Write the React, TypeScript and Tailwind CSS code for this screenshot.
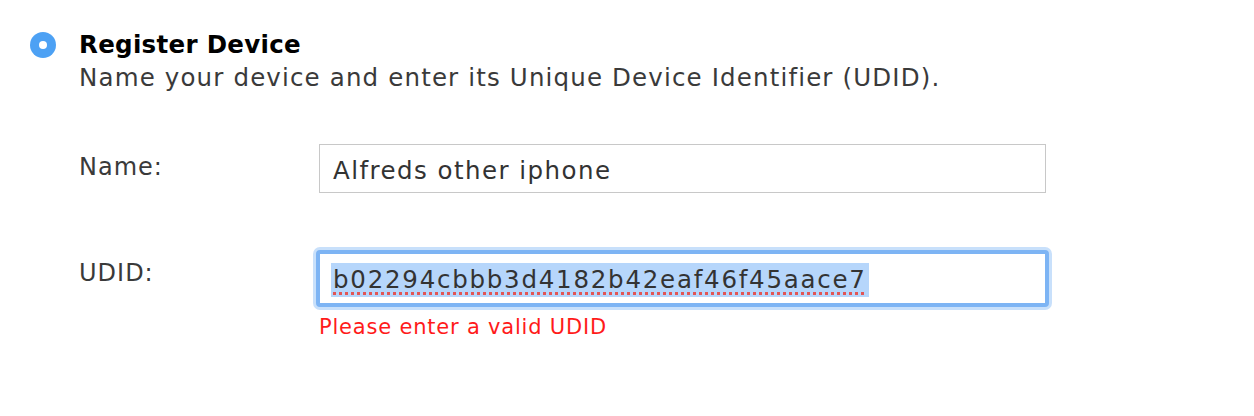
import React from "react";

export default function App() {
  return (
    <div className="w-[1254px] h-[416px] bg-white font-['DejaVu_Sans',sans-serif] text-[#333333] pl-[30px] pt-[30px]">
      <div className="flex items-start gap-[23px]">
        <div className="mt-[2px] w-[26px] h-[26px] rounded-full bg-[#4da1f4] flex items-center justify-center">
          <div className="w-[8px] h-[8px] rounded-full bg-white" />
        </div>
        <div className="flex flex-col">
          <div className="text-[24.5px] leading-[30px] font-bold text-black tracking-[0.3px]">Register Device</div>
          <div className="mt-[3px] text-[24.5px] leading-[30px] text-[#3a3a3a] tracking-[1.15px]">
            Name your device and enter its Unique Device Identifier (UDID).
          </div>
        </div>
      </div>

      <div className="ml-[49px] mt-[51px] flex flex-col">
        <div className="flex items-start">
          <div className="w-[240px] pt-[8px] text-[24px] leading-[30px] text-[#3a3a3a] tracking-[1px]">Name:</div>
          <div className="w-[727px] h-[49px] border border-[#c8c8c8] flex items-center pl-[13px] pt-[5px] text-[24.5px] text-[#333333] tracking-[1.45px]">
            Alfreds other iphone
          </div>
        </div>

        <div className="flex items-start mt-[57px]">
          <div className="w-[237px] pt-[8px] text-[24px] leading-[30px] text-[#3a3a3a] tracking-[1px]">UDID:</div>
          <div className="flex flex-col">
            <div className="w-[733px] h-[57px] rounded-[4px] border-[4px] border-[#7db4f4] shadow-[0_0_0_3px_#c8e0fb] bg-white flex items-center pl-[11px] pt-[3px]">
              <span className="bg-[#b6d6fb] text-[24.5px] leading-[34px] px-[2px] text-[#333333] tracking-[1.75px] underline decoration-dotted decoration-[#e25555] decoration-[3px] underline-offset-[4px]">
                b02294cbbb3d4182b42eaf46f45aace7
              </span>
            </div>
            <div className="ml-[3px] mt-[7px] text-[21px] leading-[26px] text-[#ff1a1a] tracking-[0.8px]">Please enter a valid UDID</div>
          </div>
        </div>
      </div>
    </div>
  );
}
